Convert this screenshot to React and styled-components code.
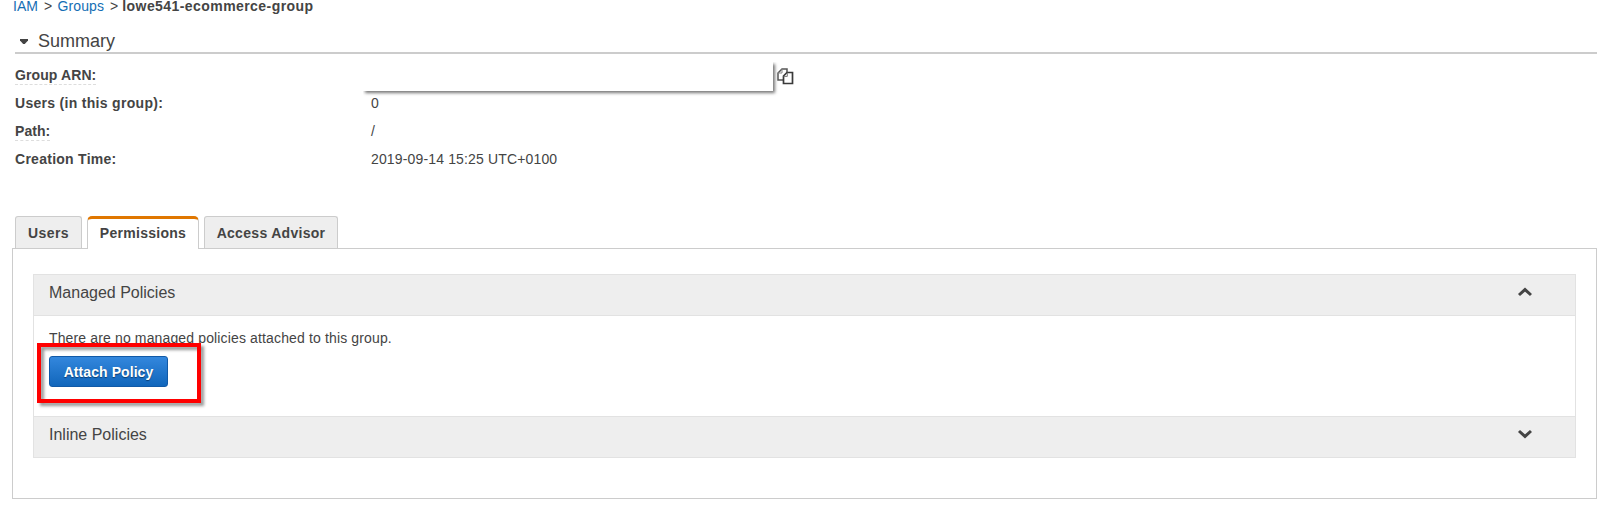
import React from "react";
import styled, { createGlobalStyle } from "styled-components";

const Global = createGlobalStyle`
  * { box-sizing: border-box; }
  body {
    margin: 0;
    background: #fff;
    color: #444;
    font: 14px/20px "Liberation Sans", Arial, sans-serif;
  }
`;

const Page = styled.main`
  height: 505px;
  padding: 0 2px 0 12px;
`;

const Breadcrumb = styled.nav`
  display: flex;
  height: 16px;
  padding-left: 1px;
  line-height: 12px;
`;

const Crumb = styled.a`
  color: #146eb4;
  letter-spacing: ${(p) => p.$track || 0}px;
`;

const Separator = styled.span`
  margin: 0 ${(p) => p.$after}px 0 6px;
`;

const Current = styled.strong`
  letter-spacing: ${(p) => p.$track || 0}px;
`;

const SummaryHeader = styled.header`
  display: flex;
  align-items: center;
  height: 38px;
  margin: 0 0 0 3px;
  padding: 14px 0 0 5px;
  border-bottom: 2px solid #ccc;
`;

const Caret = styled.svg`
  width: 8px;
  height: 5px;
  margin: 1px 10px 0 0;
`;

const SummaryTitle = styled.h2`
  margin: 0;
  font-size: 18px;
  font-weight: 400;
  line-height: 22px;
  letter-spacing: ${(p) => p.$track || 0}px;
`;

const Details = styled.dl`
  display: grid;
  grid-template-columns: 356px 1fr;
  grid-auto-rows: 28px;
  margin: 7px 0 0 3px;
`;

const Term = styled.dt`
  padding-top: 4px;
  font-weight: 700;
  line-height: 20px;
`;

const TermText = styled.span`
  display: inline-block;
  height: 20px;
  letter-spacing: ${(p) => p.$track || 0}px;
  ${(p) => p.$hint && "border-bottom: 1px dashed #ddd;"}
`;

const Value = styled.dd`
  display: flex;
  margin: 0;
  padding-top: 4px;
  letter-spacing: ${(p) => p.$track || 0}px;
`;

const Redacted = styled.span`
  width: 410px;
  height: 29px;
  margin: -3px 4px 0 -8px;
  background: #fff;
  box-shadow: 2px 2px 3px #777;
  clip-path: inset(0 -8px -8px 0);
`;

const CopyIcon = styled.svg`
  width: 17px;
  height: 17px;
  margin-top: 3px;
`;

const TabBar = styled.div`
  display: flex;
  gap: 5px;
  height: 33px;
  margin: 43px 0 -1px;
  padding-left: 3px;
  position: relative;
`;

const Tab = styled.button`
  width: ${(p) => p.$width}px;
  height: ${(p) => (p.$active ? 33 : 32)}px;
  padding: 0 0 ${(p) => (p.$active ? 2 : 0)}px;
  border: 1px solid #ccc;
  border-top: ${(p) => (p.$active ? "3px solid #e07700" : "1px solid #ccc")};
  border-bottom: 0;
  border-radius: ${(p) => (p.$active ? "5px 5px 0 0" : "3px 3px 0 0")};
  background: ${(p) => (p.$active ? "#fff" : "#eee")};
  color: #444;
  font: 700 14px/20px "Liberation Sans", Arial, sans-serif;
  letter-spacing: ${(p) => p.$track || 0}px;
  white-space: nowrap;
`;

const Panel = styled.section`
  height: 251px;
  padding: 25px 20px 0;
  border: 1px solid #ccc;
`;

const Accordion = styled.div`
  border: 1px solid #e2e2e2;
`;

const AccordionHeader = styled.div`
  display: flex;
  justify-content: space-between;
  height: ${(p) => (p.$last ? 41 : 40)}px;
  padding: 8px 42px 0 15px;
  border-top: ${(p) => (p.$last ? "1px solid #e2e2e2" : "0")};
  background: #eee;
`;

const AccordionTitle = styled.h3`
  margin: 0;
  font-size: 16px;
  font-weight: 400;
  line-height: 20px;
  letter-spacing: ${(p) => p.$track || 0}px;
`;

const Chevron = styled.svg`
  width: 16px;
  height: 10px;
  margin-top: 4px;
  ${(p) => p.$down && "transform: rotate(180deg);"}
`;

const AccordionBody = styled.div`
  height: 101px;
  padding: 12px 0 0 15px;
  border-top: 1px solid #e2e2e2;
`;

const Message = styled.p`
  margin: 0;
  letter-spacing: ${(p) => p.$track || 0}px;
`;

const ActionArea = styled.div`
  position: relative;
  width: 120px;
  margin-top: 8px;
`;

const PrimaryButton = styled.button`
  display: block;
  width: 119px;
  height: 31px;
  padding: 0;
  border: 1px solid #1159a6;
  border-radius: 3px;
  background: linear-gradient(#3387dd, #1166bb);
  color: #fff;
  font: 700 14px/20px "Liberation Sans", Arial, sans-serif;
  letter-spacing: ${(p) => p.$track || 0}px;
  text-shadow: 0 1px 1px #0a3c70;
  white-space: nowrap;
`;

const Highlight = styled.span`
  position: absolute;
  left: -12px;
  top: -13px;
  width: 164px;
  height: 60px;
  border: 4px solid #f00;
  filter: drop-shadow(3px 3px 1.5px rgba(0, 0, 0, 0.4));
  pointer-events: none;
`;

const ChevronMark = ({ down }) => (
  <Chevron $down={down} viewBox="0 0 16 10">
    <path d="M2 8 8 2.6 14 8" fill="none" stroke="#444" strokeWidth="3" />
  </Chevron>
);

export default function App() {
  return (
    <>
      <Global />
      <Page>
        <Breadcrumb>
          <Crumb>IAM</Crumb>
          <Separator $after={5.5}>&gt;</Separator>
          <Crumb $track={0.1}>Groups</Crumb>
          <Separator $after={4}>&gt;</Separator>
          <Current $track={0.43}>lowe541-ecommerce-group</Current>
        </Breadcrumb>

        <SummaryHeader>
          <Caret viewBox="0 0 8 5"><path d="M0 0h8v1.4L4.8 5H3.2L0 1.4z" fill="#444" /></Caret>
          <SummaryTitle>Summary</SummaryTitle>
        </SummaryHeader>

        <Details>
          <Term><TermText $hint $track={0.1}>Group ARN:</TermText></Term>
          <Value>
            <Redacted />
            <CopyIcon viewBox="0 0 17 17" fill="#fff">
              <path d="M5 1h5v11H1V5z" stroke="#555" strokeWidth="1.5" />
              <path d="M1 5h4V1" fill="none" stroke="#888" />
              <path d="M10 4.5h5.5v11h-9V8z" stroke="#3a3a3a" strokeWidth="1.7" />
              <path d="M6.7 8.4H10.3V4.7" fill="none" stroke="#777" />
            </CopyIcon>
          </Value>
          <Term><TermText $track={0.3}>Users (in this group):</TermText></Term>
          <Value>0</Value>
          <Term><TermText $hint $track={0.05}>Path:</TermText></Term>
          <Value>/</Value>
          <Term><TermText $track={0.27}>Creation Time:</TermText></Term>
          <Value $track={0.15}>2019-09-14 15:25 UTC+0100</Value>
        </Details>

        <TabBar>
          <Tab $width={67} $track={0.4}>Users</Tab>
          <Tab $width={112} $active $track={0.28}>Permissions</Tab>
          <Tab $width={134} $track={0.3}>Access Advisor</Tab>
        </TabBar>

        <Panel>
          <Accordion>
            <AccordionHeader>
              <AccordionTitle>Managed Policies</AccordionTitle>
              <ChevronMark />
            </AccordionHeader>
            <AccordionBody>
              <Message $track={0.14}>There are no managed policies attached to this group.</Message>
              <ActionArea>
                <PrimaryButton $track={0.08}>Attach Policy</PrimaryButton>
                <Highlight />
              </ActionArea>
            </AccordionBody>
            <AccordionHeader $last>
              <AccordionTitle>Inline Policies</AccordionTitle>
              <ChevronMark down />
            </AccordionHeader>
          </Accordion>
        </Panel>
      </Page>
    </>
  );
}
